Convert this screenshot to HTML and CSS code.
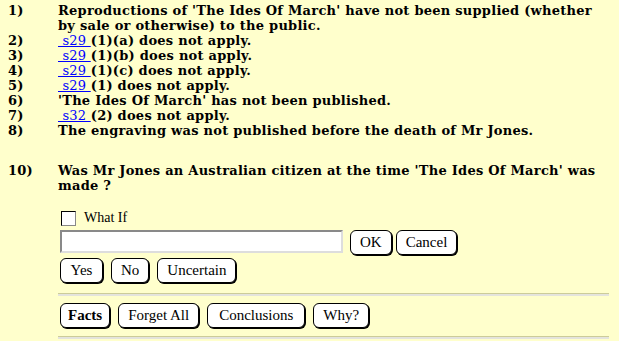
FILE: index.html
```html
<!DOCTYPE html>
<html lang="en">
<head>
    <meta charset="UTF-8">
    <title>Consultation</title>
    <link rel="stylesheet" href="styles.css">
</head>
<body>
    <div class="steps">
        <div class="step"><span class="num">1)</span><span class="text">Reproductions of 'The Ides Of March' have not been supplied (whether by sale or otherwise) to the public.</span></div>
        <div class="step"><span class="num">2)</span><span class="text"><a href="#">&nbsp;s29&nbsp;</a>(1)(a) does not apply.</span></div>
        <div class="step"><span class="num">3)</span><span class="text"><a href="#">&nbsp;s29&nbsp;</a>(1)(b) does not apply.</span></div>
        <div class="step"><span class="num">4)</span><span class="text"><a href="#">&nbsp;s29&nbsp;</a>(1)(c) does not apply.</span></div>
        <div class="step"><span class="num">5)</span><span class="text"><a href="#">&nbsp;s29&nbsp;</a>(1) does not apply.</span></div>
        <div class="step"><span class="num">6)</span><span class="text">'The Ides Of March' has not been published.</span></div>
        <div class="step"><span class="num">7)</span><span class="text"><a href="#">&nbsp;s32&nbsp;</a>(2) does not apply.</span></div>
        <div class="step"><span class="num">8)</span><span class="text">The engraving was not published before the death of Mr Jones.</span></div>
    </div>

    <div class="step question"><span class="num">10)</span><span class="text">Was Mr Jones an Australian citizen at the time 'The Ides Of March' was made ?</span></div>

    <form class="answer">
        <label class="whatif"><input type="checkbox"> What If</label>
        <div class="row">
            <input type="text" class="value">
            <button type="button">OK</button>
            <button type="button" class="tight">Cancel</button>
        </div>
        <div class="row">
            <button type="button" class="yes">Yes</button>
            <button type="button">No</button>
            <button type="button">Uncertain</button>
        </div>
    </form>

    <hr class="sep">
    <div class="row nav">
        <button type="button" class="current">Facts</button>
        <button type="button">Forget All</button>
        <button type="button" class="wide">Conclusions</button>
        <button type="button">Why?</button>
    </div>
    <hr class="sep last">
</body>
</html>
```
FILE: styles.css
```css
body {
    margin: 0;
    padding: 3px 10px 0 8px;
    background: #ffffcc;
    color: #000;
    font-family: "Liberation Serif", serif;
}

/* Numbered reasoning steps */
.step {
    display: flex;
    font-family: "DejaVu Serif", serif;
    font-size: 13px;
    font-weight: bold;
    letter-spacing: 0.25px;
    line-height: 15px;
}

.num {
    width: 50px;
    flex-shrink: 0;
}

.text {
    flex: 1;
}

.step a {
    color: #0000ff;
    font-weight: normal;
}

.question {
    margin-top: 25px;
}

/* Answer area */
.answer {
    margin: 16px 0 0 52px;
}

.whatif {
    display: flex;
    align-items: center;
    gap: 8px;
    font-size: 14px;
    height: 18px;
}

.whatif input {
    appearance: none;
    margin: 0 0 0 1px;
    width: 15px;
    height: 15px;
    border: 1px solid #000;
    border-right-color: #888;
    border-bottom-color: #888;
    background: #fff;
}

.row {
    display: flex;
    align-items: flex-start;
    gap: 8px;
    margin-top: 3px;
}

.value {
    width: 275px;
    height: 17px;
    margin: 0 -1px 0 0;
    border: 2px inset #ddd;
    background: #fff;
}

.row .tight {
    margin-left: -4px;
}

button {
    font-family: "Liberation Serif", serif;
    font-size: 15px;
    background: #fff;
    color: #000;
    border: 1px solid #000;
    box-shadow: 1px 1px 0 #000;
    border-radius: 6px;
    padding: 2px 9px;
    height: 25px;
}

.yes {
    min-width: 43px;
}

.nav {
    margin-left: 52px;
}

.nav .current {
    font-weight: bold;
    padding: 2px 7px;
}

.nav .wide {
    padding: 2px 11px;
}

.sep {
    margin: 10px 0 7px 50px;
    border: none;
    border-top: 1px solid #cccc99;
    border-bottom: 2px solid #e4e4dc;
}

.sep.last {
    margin-top: 8px;
}
```
